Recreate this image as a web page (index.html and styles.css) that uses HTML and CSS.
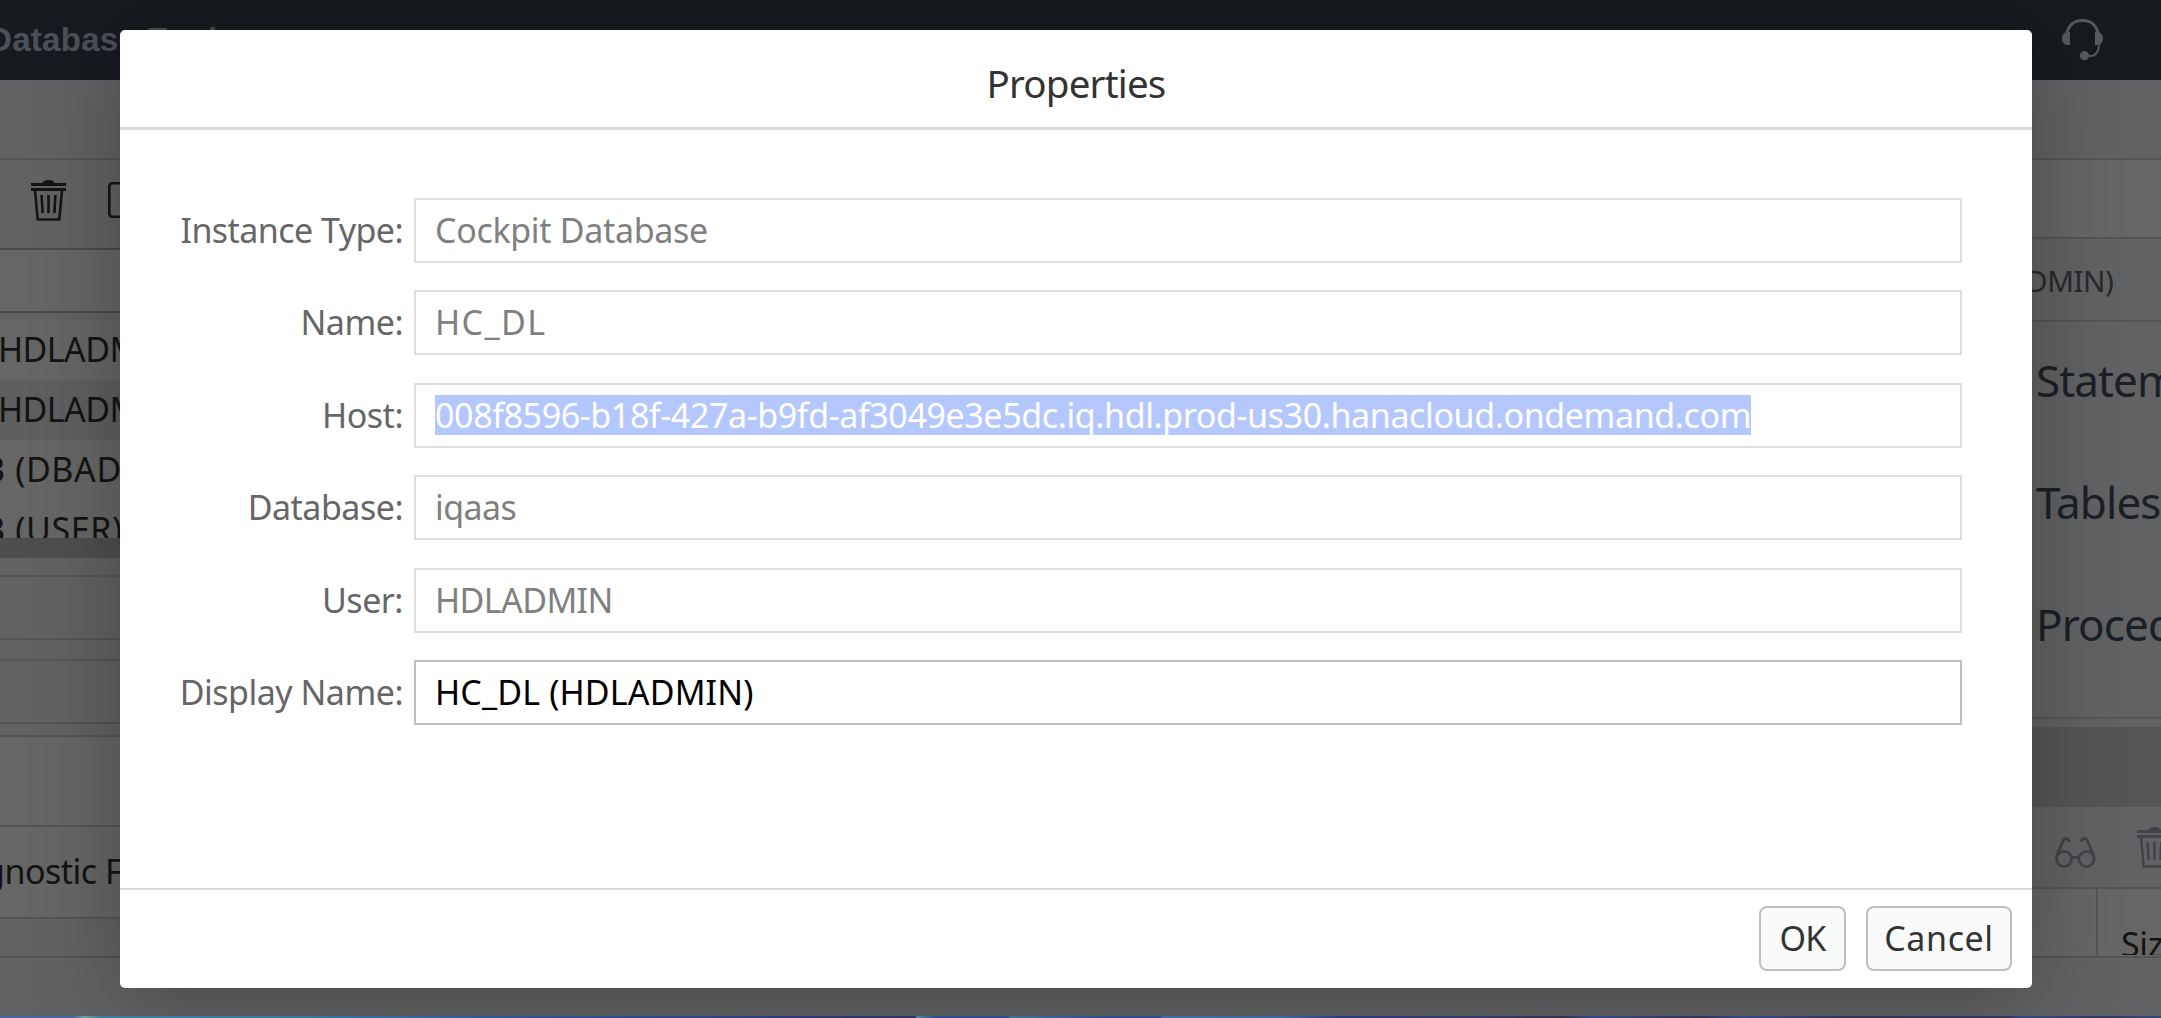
FILE: index.html
```html
<!DOCTYPE html>
<html lang="en">
<head>
<meta charset="utf-8">
<title>Properties</title>
<link rel="stylesheet" href="styles.css">
</head>
<body>
<svg class="defs" width="0" height="0" aria-hidden="true">
  <symbol id="trash" viewBox="0 0 35 41">
    <path fill="currentColor" d="M0 3h35v3H0zM0 8h35v3H0zM11 3.500C12 1 14 0 17.500 0S23 1 24 3.500z"/>
    <path fill="none" stroke="currentColor" stroke-width="2.600" stroke-linejoin="round" d="M4 10l2.700 29.500h21.600L31 10"/>
    <path fill="none" stroke="currentColor" stroke-width="2.600" d="M10.600 15l1 18M17.500 15v18M24.400 15l-1 18"/>
  </symbol>
</svg>

<div class="app">
  <header class="shell">
    <h1 class="shell-title">Database Explorer</h1>
    <svg class="headset" width="41" height="42" viewBox="0 0 41 42">
      <path fill="none" stroke="currentColor" stroke-width="3" d="M4.500 16C6 6.500 12 1.500 20.500 1.500S35 6.500 36.500 16"/>
      <path fill="currentColor" d="M8 13v13H5.500C2 26 0 23 0 19.500S2 13 5.500 13zM33 13v13h2.500c3.500 0 5.500-3 5.500-6.500S39 13 35.500 13z"/>
      <path fill="none" stroke="currentColor" stroke-width="2" d="M37 25c0 7-3 12-8 12h-6"/>
      <circle cx="22.500" cy="36.700" r="4.600" fill="currentColor"/>
    </svg>
  </header>

  <div class="panes">
    <section class="left">
      <div class="bar tabs"></div>
      <div class="bar tools">
        <svg width="35" height="41"><use href="#trash"/></svg>
        <svg class="square" width="36" height="36" viewBox="0 0 36 36"><rect x="1.300" y="1.300" width="33.400" height="33.400" rx="3" fill="none" stroke="currentColor" stroke-width="2.600"/></svg>
      </div>
      <div class="bar search"></div>
      <ul class="tree">
        <li>HDLADMIN)</li>
        <li class="alt">HDLADMIN)</li>
        <li class="db">B (DBADMIN)</li>
        <li class="db">B (USER)</li>
      </ul>
      <div class="scroll"></div>
      <div class="bar gap1"></div>
      <div class="bar row1"></div>
      <div class="bar gap2"></div>
      <div class="bar row2"></div>
      <div class="bar gap3"></div>
      <div class="bar blank"></div>
      <div class="bar diag">gnostic Files</div>
      <div class="bar gap4"></div>
    </section>

    <section class="right">
      <div class="bar tabs"></div>
      <div class="bar r-tools"></div>
      <div class="bar r-title">DMIN)</div>
      <div class="bar stats">
        <p>Statements</p>
        <p>Tables</p>
        <p>Procedures</p>
      </div>
      <div class="slot"></div>
      <div class="band"></div>
      <div class="bar r-icons">
        <svg width="41" height="32" viewBox="0 0 41 32" fill="none" stroke="currentColor" stroke-width="2.800">
          <circle cx="9" cy="22" r="7.600"/><circle cx="31.500" cy="22" r="7.600"/>
          <path d="M16.500 20.500h7.500M1.800 18.500L8.500 3c1.500-2.500 5.500-2 5.500 2M38.700 18.500L32 3c-1.500-2.500-5.500-2-5.500 2"/>
        </svg>
        <svg width="35" height="41"><use href="#trash"/></svg>
      </div>
      <div class="bar grid-head"><div></div><div class="size">Size</div></div>
    </section>
  </div>
</div>

<div class="overlay">
  <div class="dialog" role="dialog">
    <h2 class="dialog-head">Properties</h2>
    <form class="form">
      <label class="l-type">Instance Type:</label><div class="field"><span class="v-type">Cockpit Database</span></div>
      <label class="l-name">Name:</label><div class="field"><span class="v-name">HC_DL</span></div>
      <label class="l-name">Host:</label><div class="field"><span class="selected">008f8596-b18f-427a-b9fd-af3049e3e5dc.iq.hdl.prod-us30.hanacloud.ondemand.com</span></div>
      <label class="l-name">Database:</label><div class="field"><span class="v-user">iqaas</span></div>
      <label class="l-name">User:</label><div class="field"><span class="v-user">HDLADMIN</span></div>
      <label class="l-name">Display Name:</label><div class="field editable"><span class="v-display">HC_DL (HDLADMIN)</span></div>
    </form>
    <footer class="dialog-foot">
      <button type="button" class="btn ok">OK</button>
      <button type="button" class="btn cancel">Cancel</button>
    </footer>
  </div>
</div>
<div class="wallpaper"></div>
</body>
</html>
```

FILE: styles.css
```css
* { box-sizing: border-box; margin: 0; padding: 0; }

body {
  width: 2161px;
  height: 1018px;
  overflow: hidden;
  font: 34px/37px "Noto Sans", "Open Sans", sans-serif;
  background: #fff;
}

.defs { display: block; position: absolute; }
svg { display: block; flex: none; }

/* Application behind the dialog */
.app { height: 1016px; display: flex; flex-direction: column; color: #333; }

.shell {
  height: 80px;
  display: flex;
  justify-content: space-between;
  align-items: center;
  padding: 0 58px 0 0;
  background: #3a414e;
  color: #f0f0f0;
}
.shell-title {
  margin: 0 0 0 -12px;
  font: bold 33px/40px "Liberation Sans", Arial, sans-serif;
  letter-spacing: .3px;
  color: #bfcbdb;
}
.headset { color: #dfdfdf; }

.panes { flex: 1; display: grid; grid-template-columns: 1000px 1fr; overflow: hidden; }
.left, .right { display: flex; flex-direction: column; background: #f3f5f7; overflow: hidden; }
.bar { border-bottom: 2px solid #d4d5d6; flex: none; }

.tabs { height: 80px; }
.tools { height: 90px; padding: 20px 0 0 31px; display: flex; gap: 42px; border-color: #b8b8b8; }
.square { margin-top: 2px; }
.search { height: 63px; background: #fff; border-color: #b8b8b8; }
.tree { height: 225px; padding-top: 7px; overflow: hidden; list-style: none; letter-spacing: -.6px; }
.tree li { height: 60px; background: #fff; line-height: 59px; text-indent: -2px; }
.tree .alt { background: #eaeef2; }
.tree .db { text-indent: -17px; letter-spacing: .6px; }
.scroll { height: 20px; flex: none; background: #c2c2c2; }
.gap1 { height: 19px; }
.row1 { height: 63px; }
.gap2 { height: 21px; }
.row2 { height: 63px; }
.gap3 { height: 13px; }
.blank { height: 90px; background: #fff; }
.diag { height: 92px; background: #fff; line-height: 88px; text-indent: -16px; letter-spacing: -.5px; }
.gap4 { height: 39px; }

.r-tools { height: 79px; background: #fff; }
.r-title { height: 83px; padding-left: 1026px; font-size: 29.500px; line-height: 83px; letter-spacing: -.4px; color: #666; }
.stats { height: 397px; padding-left: 1036px; font-size: 44px; line-height: 122px; letter-spacing: -.9px; color: #475060; }
.stats p { position: relative; top: -3px; }
.slot { height: 8px; flex: none; }
.band { height: 80px; flex: none; background: #d4d5dc; }
.r-icons { height: 82px; display: flex; gap: 41px; padding: 20px 0 0 1055px; color: #a5a9b3; }
.r-icons svg:first-child { margin-top: 10px; }
.grid-head { height: 69px; display: grid; grid-template-columns: 1098px 1fr; background: #fff; overflow: hidden; }
.grid-head div:first-child { border-right: 2px solid #d4d5d6; }
.size { height: 66px; overflow: hidden; padding: 37px 0 0 23px; letter-spacing: -.4px; }

/* Sliver of the desktop below the window */
.wallpaper {
  position: absolute;
  inset: 1016px 0 0 0;
  background: linear-gradient(90deg, #4a66a0 0, #4a66a0 74px, #6fa09c 84px, #3f7ba0 100px, #3a76a0 300px, #2f5a98 480px, #2f4c92 600px, #2d3670 850px, #2d3468 915px, #4a86a8 917px, #304a94 935px, #304a94 1008px, #3c7098 1010px, #304a94 1110px, #304a94 1160px, #3c70a0 1163px, #3a68a0 1280px, #2c3c80 1340px, #343a66 1500px, #2f3348 1560px, #34488a 1592px, #303654 1700px, #34488a 1745px, #303654 1850px, #30385c 2010px, #364880 2020px, #303a62 2100px, #364878 2161px);
}

.overlay {
  position: absolute;
  inset: 0;
  display: grid;
  padding: 30px 129px 30px 120px;
  background: rgba(0, 0, 0, .6);
}

/* Dialog */
.dialog {
  display: flex;
  flex-direction: column;
  border-radius: 5px;
  background: #fff;
  box-shadow: 0 10px 90px rgba(0, 0, 0, .28);
}
.dialog-head {
  height: 100px;
  padding-top: 26px;
  border-bottom: 3px solid #dcdcdc;
  font-size: 38.500px;
  font-weight: 400;
  line-height: 54px;
  letter-spacing: -.8px;
  text-align: center;
  color: #333;
}
.form {
  flex: 1;
  display: grid;
  grid-template-columns: 283px 1548px;
  grid-auto-rows: 65px;
  row-gap: 27.400px;
  column-gap: 11px;
  padding-top: 68px;
}
.form label {
  padding-top: 14px;
  text-align: right;
  color: #666;
}
.field {
  padding: 10px 19px;
  border: 2px solid #dedede;
  color: #808080;
}
.field span { display: inline-block; vertical-align: top; padding: 2px 0 1px; white-space: nowrap; }
.field .selected { background: #b5c7ff; color: #fff; letter-spacing: -.385px; }
.editable { border-color: #bfbfbf; color: #000; }

.l-type { letter-spacing: -.550px; }
.l-name { letter-spacing: -.5px; }
.v-type { letter-spacing: -.320px; }
.v-name { letter-spacing: 1.400px; }
.v-user { letter-spacing: -.6px; }
.v-display { letter-spacing: .150px; }

.dialog-foot {
  height: 100px;
  display: flex;
  justify-content: flex-end;
  gap: 20px;
  padding: 16px 20px 0 0;
  border-top: 2px solid #d9d9d9;
}
.btn {
  height: 65px;
  padding-bottom: 1px;
  border: 2px solid #bfbfbf;
  border-radius: 8px;
  background: #f9fafa;
  color: #333;
  font: inherit;
}
.ok { width: 87px; letter-spacing: -.9px; }
.cancel { width: 146px; letter-spacing: .6px; }
```
